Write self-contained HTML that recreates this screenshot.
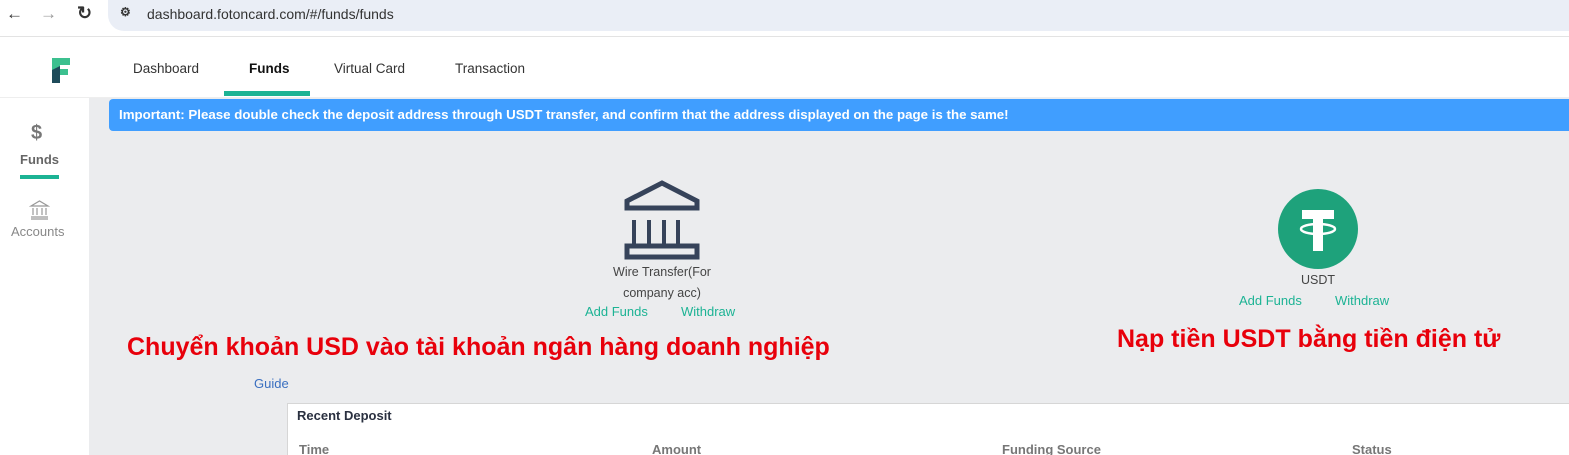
<!DOCTYPE html>
<html><head><meta charset="utf-8"><style>
*{margin:0;padding:0;box-sizing:border-box}
html,body{width:1569px;height:455px;overflow:hidden}
body{position:relative;font-family:"Liberation Sans",sans-serif;background:#fff}
.a{position:absolute}
</style></head><body>
<div class="a" style="left:0;top:0;width:1569px;height:37px;background:#fff;border-bottom:1px solid #e3e3e3"></div>
<div class="a" style="left:108px;top:0;width:1470px;height:31px;background:#eaeef6;border-radius:0 0 0 16px"></div>
<div class="a" style="left:6px;top:4px;font-size:17px;color:#333">←</div>
<div class="a" style="left:40px;top:4px;font-size:17px;color:#999">→</div>
<div class="a" style="left:77px;top:3px;font-size:18px;color:#333;font-weight:bold">↻</div>
<div class="a" style="left:120px;top:5px;font-size:12px;color:#333;font-weight:bold">⚙</div>
<div class="a" style="left:147px;top:6px;font-size:14px;color:#333">dashboard.fotoncard.com/#/funds/funds</div>
<svg class="a" style="left:50px;top:56px" width="22" height="28" viewBox="0 0 22 28"><path d="M2 2h18v7H10v4h8v6H10v8H2z" fill="#3cc08f"/><path d="M2 14l8-4v17H2z" fill="#1e4b5a"/></svg>
<div class="a" style="left:133px;top:61px;font-size:13.5px;color:#333">Dashboard</div>
<div class="a" style="left:249px;top:61px;font-size:13.5px;color:#111;font-weight:bold">Funds</div>
<div class="a" style="left:224px;top:91px;width:86px;height:5px;background:#1cb394"></div>
<div class="a" style="left:334px;top:61px;font-size:13.5px;color:#333">Virtual Card</div>
<div class="a" style="left:455px;top:61px;font-size:13.5px;color:#333">Transaction</div>
<div class="a" style="left:0;top:97px;width:1569px;height:1px;background:#eee"></div>
<div class="a" style="left:89px;top:98px;width:1480px;height:357px;background:#ebecee"></div>
<div class="a" style="left:31px;top:122px;font-size:20px;font-weight:bold;color:#777">$</div>
<div class="a" style="left:20px;top:152px;font-size:13px;font-weight:bold;color:#666">Funds</div>
<div class="a" style="left:20px;top:175px;width:39px;height:4px;background:#1cb394"></div>
<svg class="a" style="left:29px;top:200px" width="21" height="20" viewBox="0 0 21 20" fill="none" stroke="#999" stroke-width="1.2"><path d="M2 6L10.5 1 19 6z"/><path d="M4 8v7M8 8v7M13 8v7M17 8v7M2 17h17M2 19h17"/></svg>
<div class="a" style="left:11px;top:224px;font-size:13px;color:#888">Accounts</div>
<div class="a" style="left:109px;top:99px;width:1470px;height:32px;background:#409eff;border-radius:4px"></div>
<div class="a" style="left:119px;top:107px;font-size:13.3px;font-weight:bold;color:#fff;white-space:nowrap">Important: Please double check the deposit address through USDT transfer, and confirm that the address displayed on the page is the same!</div>
<svg class="a" style="left:624px;top:180px" width="76" height="80" viewBox="0 0 76 80" fill="none" stroke="#36435a" stroke-width="5"><path d="M3 28V21L38 3 73 21v7z"/><path d="M10 40v27M25 40v27M40 40v27M54 40v27" stroke-width="4"/><rect x="3" y="66" width="70" height="11"/></svg>
<div class="a" style="left:600px;top:262px;width:124px;text-align:center;font-size:12.5px;color:#444;line-height:21px">Wire Transfer(For company acc)</div>
<div class="a" style="left:585px;top:304px;font-size:13px;color:#1cb394">Add Funds</div>
<div class="a" style="left:681px;top:304px;font-size:13px;color:#1cb394">Withdraw</div>
<div class="a" style="left:1278px;top:189px;width:80px;height:80px;border-radius:50%;background:#1ea27b"></div>
<svg class="a" style="left:1278px;top:189px" width="80" height="80" viewBox="0 0 80 80"><rect x="24" y="21" width="32" height="9" fill="#fff"/><rect x="35" y="21" width="10" height="41" fill="#fff"/><ellipse cx="40" cy="40" rx="17" ry="5" fill="none" stroke="#fff" stroke-width="2.5"/></svg>
<div class="a" style="left:1301px;top:273px;font-size:12.5px;color:#444">USDT</div>
<div class="a" style="left:1239px;top:293px;font-size:13px;color:#1cb394">Add Funds</div>
<div class="a" style="left:1335px;top:293px;font-size:13px;color:#1cb394">Withdraw</div>
<div class="a" style="left:127px;top:333px;font-size:25px;font-weight:bold;color:#e8000b;white-space:nowrap">Chuyển khoản USD vào tài khoản ngân hàng doanh nghiệp</div>
<div class="a" style="left:1117px;top:325px;font-size:25px;font-weight:bold;color:#e8000b;white-space:nowrap">Nạp tiền USDT bằng tiền điện tử</div>
<div class="a" style="left:254px;top:376px;font-size:13px;color:#3a6fc0">Guide</div>
<div class="a" style="left:287px;top:403px;width:1290px;height:60px;background:#fff;border:1px solid #d6d6d6"></div>
<div class="a" style="left:297px;top:408px;font-size:13px;font-weight:bold;color:#2a3040">Recent Deposit</div>
<div class="a" style="left:299px;top:442px;font-size:13px;font-weight:bold;color:#777">Time</div>
<div class="a" style="left:652px;top:442px;font-size:13px;font-weight:bold;color:#777">Amount</div>
<div class="a" style="left:1002px;top:442px;font-size:13px;font-weight:bold;color:#777">Funding Source</div>
<div class="a" style="left:1352px;top:442px;font-size:13px;font-weight:bold;color:#777">Status</div>
</body></html>
